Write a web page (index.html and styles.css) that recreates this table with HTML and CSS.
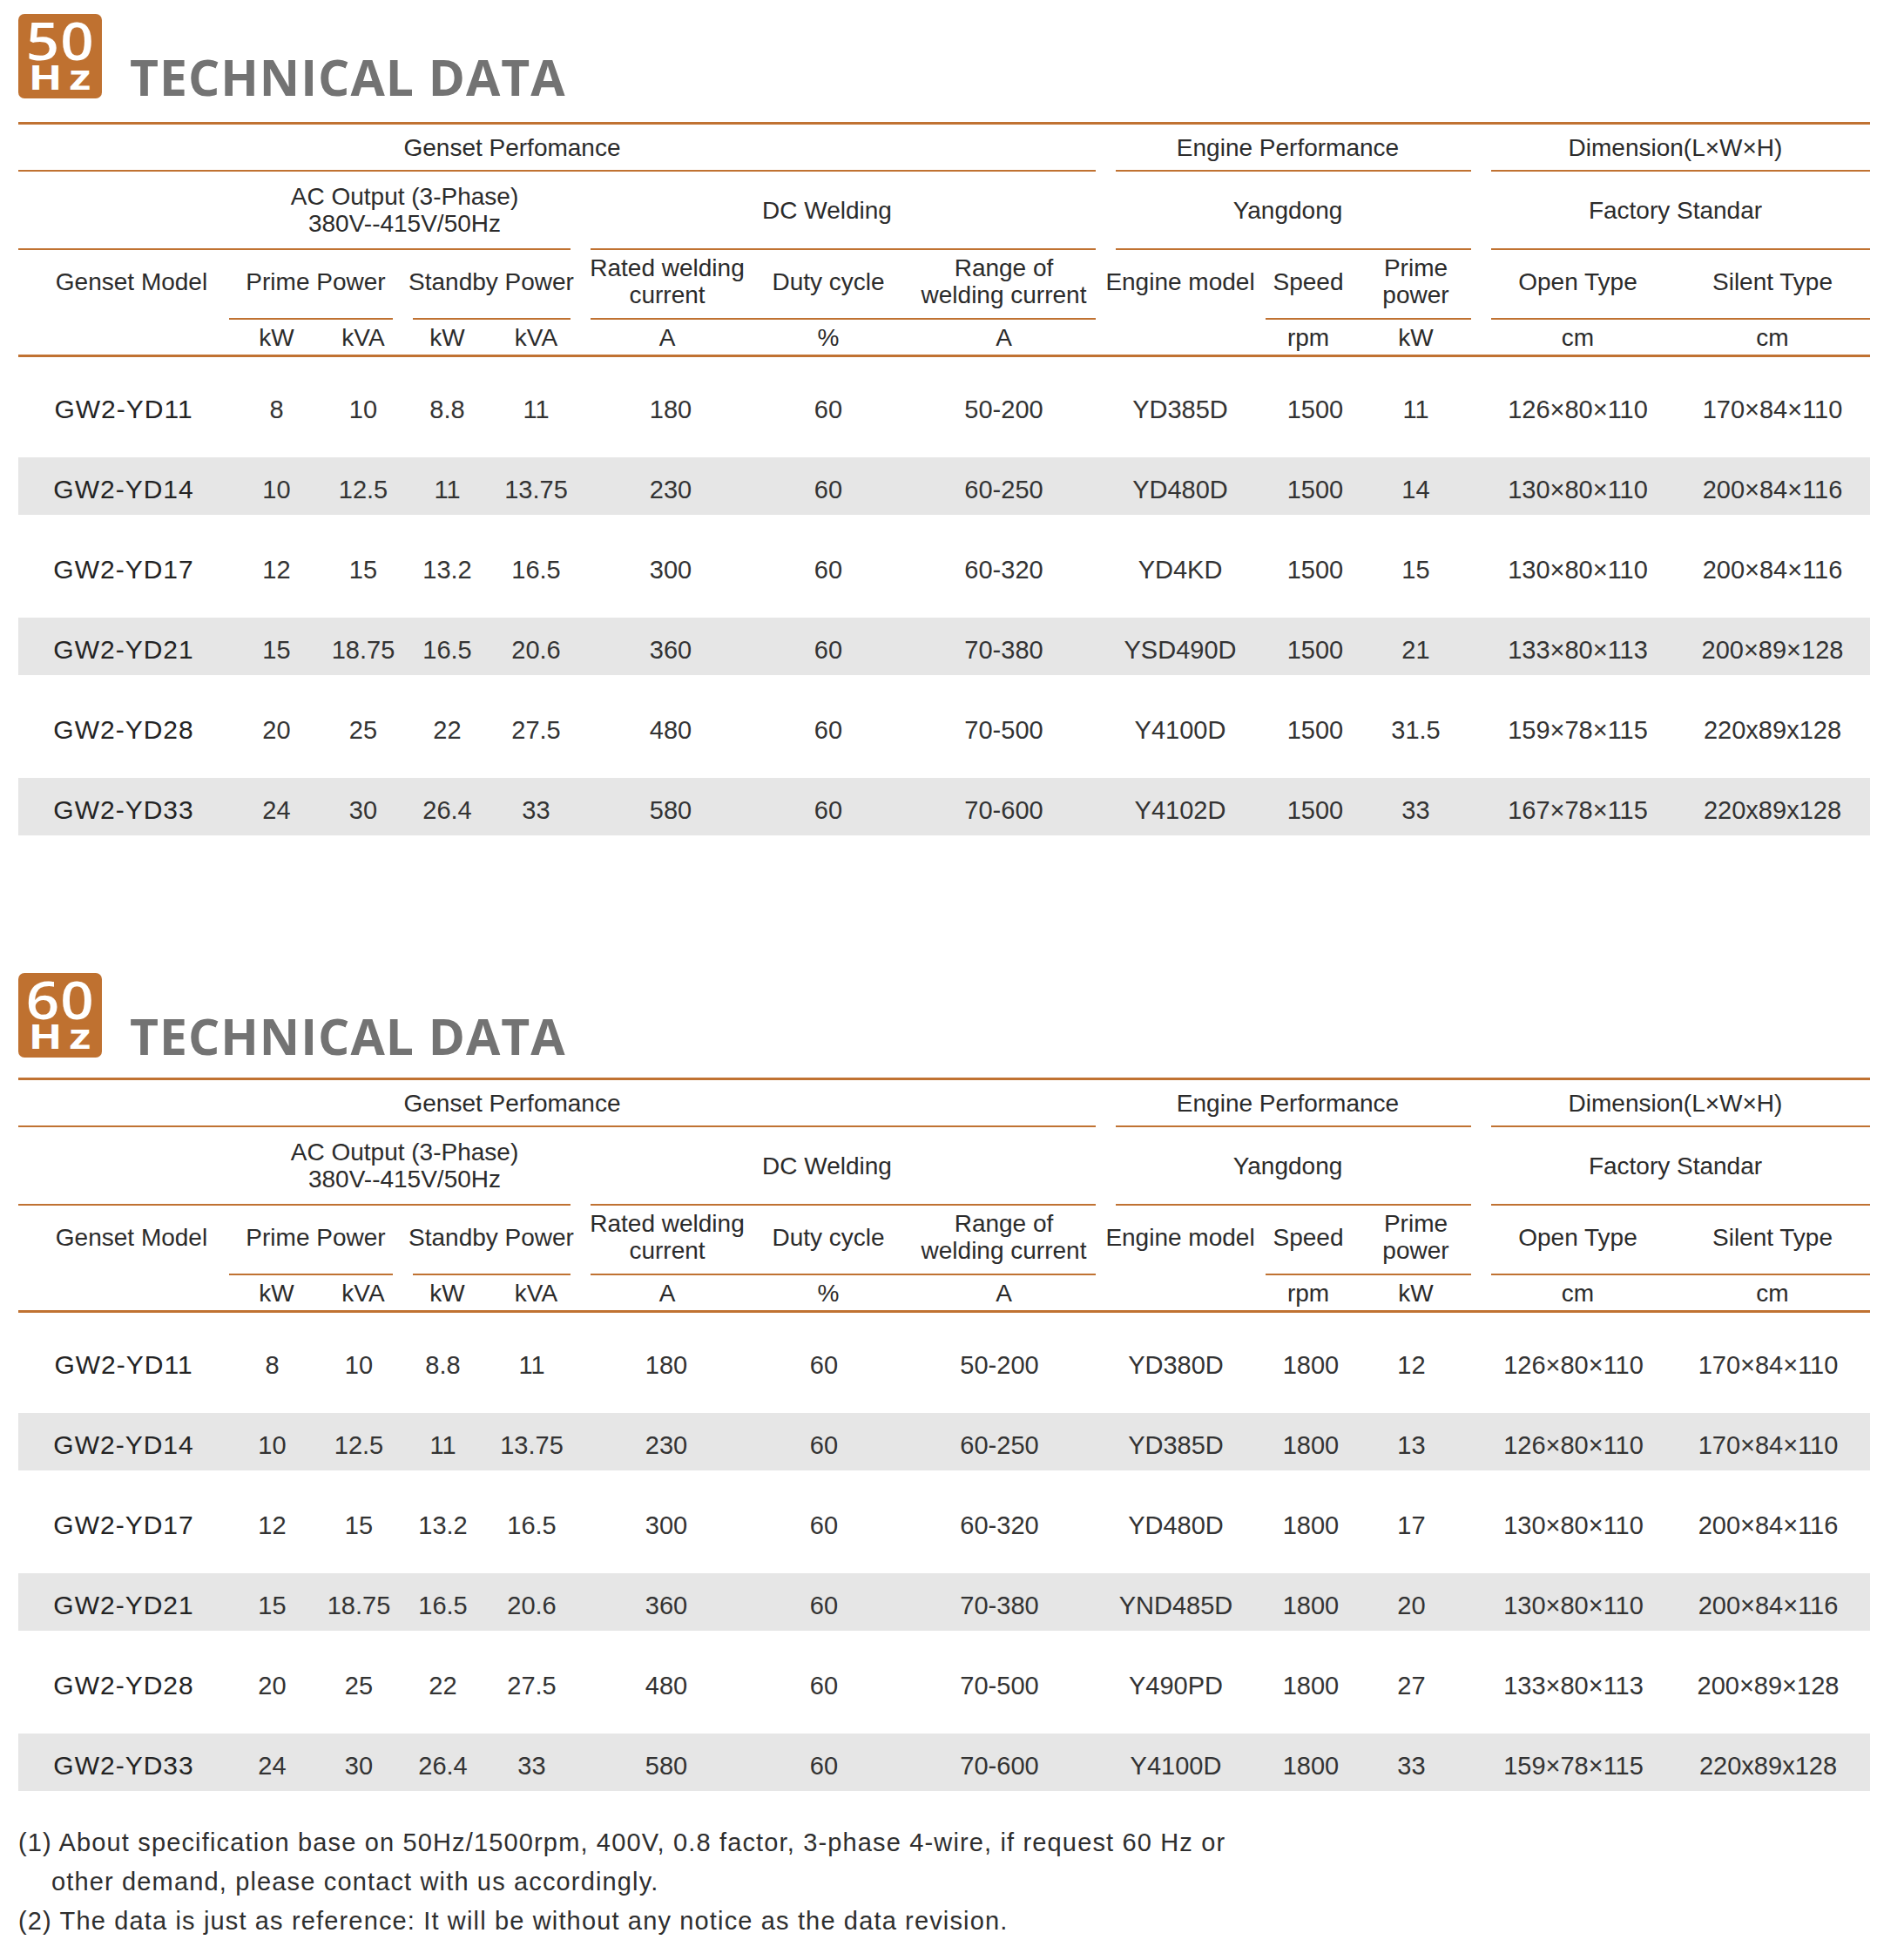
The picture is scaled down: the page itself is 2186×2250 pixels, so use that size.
FILE: index.html
```html
<!DOCTYPE html>
<html lang="en">
<head>
<meta charset="utf-8">
<title>Technical Data</title>
<link rel="stylesheet" href="styles.css">
</head>
<body>
<main class="page">

  <section class="sheet">
    <header class="head">
      <div class="badge">
        <span class="badge-num">50</span>
        <span class="badge-hz">Hz</span>
      </div>
      <h1 class="title">TECHNICAL DATA</h1>
    </header>
    <div class="table">
      <div class="thead">
        <div class="h span8 lr pad-gp">Genset Perfomance</div>
        <div class="h span3 llr pad-ep">Engine Performance</div>
        <div class="h span2 ll">Dimension(L×W×H)</div>

        <div class="h span5 lr pad-ac">AC Output (3-Phase)<br>380V--415V/50Hz</div>
        <div class="h span3 llr pad-dc">DC Welding</div>
        <div class="h span3 llr pad-ep">Yangdong</div>
        <div class="h span2 ll">Factory Standar</div>

        <div class="h hc pad-gm">Genset Model</div>
        <div class="h hc span2 lr">Prime Power</div>
        <div class="h hc span2 llr">Standby Power</div>
        <div class="h hc ll">Rated welding<br>current</div>
        <div class="h hc l">Duty cycle</div>
        <div class="h hc lr">Range of<br>welding current</div>
        <div class="h hc">Engine model</div>
        <div class="h hc ll">Speed</div>
        <div class="h hc lr pad-pp">Prime<br>power</div>
        <div class="h hc ll">Open Type</div>
        <div class="h hc l">Silent Type</div>

        <div class="h u"></div>
        <div class="h u">kW</div>
        <div class="h u">kVA</div>
        <div class="h u">kW</div>
        <div class="h u">kVA</div>
        <div class="h u">A</div>
        <div class="h u">%</div>
        <div class="h u">A</div>
        <div class="h u"></div>
        <div class="h u">rpm</div>
        <div class="h u pad-pp">kW</div>
        <div class="h u">cm</div>
        <div class="h u">cm</div>
      </div>
      <div class="tbody">
        <div class="row"><div class="d m">GW2-YD11</div><div class="d">8</div><div class="d">10</div><div class="d">8.8</div><div class="d">11</div><div class="d rw">180</div><div class="d">60</div><div class="d">50-200</div><div class="d">YD385D</div><div class="d sp">1500</div><div class="d pp">11</div><div class="d">126×80×110</div><div class="d">170×84×110</div></div>
        <div class="row"><div class="d m">GW2-YD14</div><div class="d">10</div><div class="d">12.5</div><div class="d">11</div><div class="d">13.75</div><div class="d rw">230</div><div class="d">60</div><div class="d">60-250</div><div class="d">YD480D</div><div class="d sp">1500</div><div class="d pp">14</div><div class="d">130×80×110</div><div class="d">200×84×116</div></div>
        <div class="row"><div class="d m">GW2-YD17</div><div class="d">12</div><div class="d">15</div><div class="d">13.2</div><div class="d">16.5</div><div class="d rw">300</div><div class="d">60</div><div class="d">60-320</div><div class="d">YD4KD</div><div class="d sp">1500</div><div class="d pp">15</div><div class="d">130×80×110</div><div class="d">200×84×116</div></div>
        <div class="row"><div class="d m">GW2-YD21</div><div class="d">15</div><div class="d">18.75</div><div class="d">16.5</div><div class="d">20.6</div><div class="d rw">360</div><div class="d">60</div><div class="d">70-380</div><div class="d">YSD490D</div><div class="d sp">1500</div><div class="d pp">21</div><div class="d">133×80×113</div><div class="d">200×89×128</div></div>
        <div class="row"><div class="d m">GW2-YD28</div><div class="d">20</div><div class="d">25</div><div class="d">22</div><div class="d">27.5</div><div class="d rw">480</div><div class="d">60</div><div class="d">70-500</div><div class="d">Y4100D</div><div class="d sp">1500</div><div class="d pp">31.5</div><div class="d">159×78×115</div><div class="d">220x89x128</div></div>
        <div class="row"><div class="d m">GW2-YD33</div><div class="d">24</div><div class="d">30</div><div class="d">26.4</div><div class="d">33</div><div class="d rw">580</div><div class="d">60</div><div class="d">70-600</div><div class="d">Y4102D</div><div class="d sp">1500</div><div class="d pp">33</div><div class="d">167×78×115</div><div class="d">220x89x128</div></div>
      </div>
    </div>
  </section>

  <section class="sheet sheet--60">
    <header class="head">
      <div class="badge">
        <span class="badge-num">60</span>
        <span class="badge-hz">Hz</span>
      </div>
      <h1 class="title">TECHNICAL DATA</h1>
    </header>
    <div class="table">
      <div class="thead">
        <div class="h span8 lr pad-gp">Genset Perfomance</div>
        <div class="h span3 llr pad-ep">Engine Performance</div>
        <div class="h span2 ll">Dimension(L×W×H)</div>

        <div class="h span5 lr pad-ac">AC Output (3-Phase)<br>380V--415V/50Hz</div>
        <div class="h span3 llr pad-dc">DC Welding</div>
        <div class="h span3 llr pad-ep">Yangdong</div>
        <div class="h span2 ll">Factory Standar</div>

        <div class="h hc pad-gm">Genset Model</div>
        <div class="h hc span2 lr">Prime Power</div>
        <div class="h hc span2 llr">Standby Power</div>
        <div class="h hc ll">Rated welding<br>current</div>
        <div class="h hc l">Duty cycle</div>
        <div class="h hc lr">Range of<br>welding current</div>
        <div class="h hc">Engine model</div>
        <div class="h hc ll">Speed</div>
        <div class="h hc lr pad-pp">Prime<br>power</div>
        <div class="h hc ll">Open Type</div>
        <div class="h hc l">Silent Type</div>

        <div class="h u"></div>
        <div class="h u">kW</div>
        <div class="h u">kVA</div>
        <div class="h u">kW</div>
        <div class="h u">kVA</div>
        <div class="h u">A</div>
        <div class="h u">%</div>
        <div class="h u">A</div>
        <div class="h u"></div>
        <div class="h u">rpm</div>
        <div class="h u pad-pp">kW</div>
        <div class="h u">cm</div>
        <div class="h u">cm</div>
      </div>
      <div class="tbody">
        <div class="row"><div class="d m">GW2-YD11</div><div class="d n">8</div><div class="d n">10</div><div class="d n">8.8</div><div class="d n">11</div><div class="d n rw">180</div><div class="d n">60</div><div class="d n">50-200</div><div class="d n">YD380D</div><div class="d n sp">1800</div><div class="d n pp">12</div><div class="d n">126×80×110</div><div class="d n">170×84×110</div></div>
        <div class="row"><div class="d m">GW2-YD14</div><div class="d n">10</div><div class="d n">12.5</div><div class="d n">11</div><div class="d n">13.75</div><div class="d n rw">230</div><div class="d n">60</div><div class="d n">60-250</div><div class="d n">YD385D</div><div class="d n sp">1800</div><div class="d n pp">13</div><div class="d n">126×80×110</div><div class="d n">170×84×110</div></div>
        <div class="row"><div class="d m">GW2-YD17</div><div class="d n">12</div><div class="d n">15</div><div class="d n">13.2</div><div class="d n">16.5</div><div class="d n rw">300</div><div class="d n">60</div><div class="d n">60-320</div><div class="d n">YD480D</div><div class="d n sp">1800</div><div class="d n pp">17</div><div class="d n">130×80×110</div><div class="d n">200×84×116</div></div>
        <div class="row"><div class="d m">GW2-YD21</div><div class="d n">15</div><div class="d n">18.75</div><div class="d n">16.5</div><div class="d n">20.6</div><div class="d n rw">360</div><div class="d n">60</div><div class="d n">70-380</div><div class="d n">YND485D</div><div class="d n sp">1800</div><div class="d n pp">20</div><div class="d n">130×80×110</div><div class="d n">200×84×116</div></div>
        <div class="row"><div class="d m">GW2-YD28</div><div class="d n">20</div><div class="d n">25</div><div class="d n">22</div><div class="d n">27.5</div><div class="d n rw">480</div><div class="d n">60</div><div class="d n">70-500</div><div class="d n">Y490PD</div><div class="d n sp">1800</div><div class="d n pp">27</div><div class="d n">133×80×113</div><div class="d n">200×89×128</div></div>
        <div class="row"><div class="d m">GW2-YD33</div><div class="d n">24</div><div class="d n">30</div><div class="d n">26.4</div><div class="d n">33</div><div class="d n rw">580</div><div class="d n">60</div><div class="d n">70-600</div><div class="d n">Y4100D</div><div class="d n sp">1800</div><div class="d n pp">33</div><div class="d n">159×78×115</div><div class="d n">220x89x128</div></div>
      </div>
    </div>
  </section>

  <div class="notes">
    <p>(1) About specification base on 50Hz/1500rpm, 400V, 0.8 factor, 3-phase 4-wire, if request 60 Hz or</p>
    <p class="indent">other demand, please contact with us accordingly.</p>
    <p>(2) The data is just as reference: It will be without any notice as the data revision.</p>
  </div>

</main>
</body>
</html>
```

FILE: styles.css
```css
* { box-sizing: border-box; margin: 0; padding: 0; }

html, body { background: #ffffff; }

body {
  font-family: "Liberation Sans", Arial, sans-serif;
  color: #2b2b2b;
}

.page {
  --orange: #c07232;
  --cols: 242px 109px 90px 103px 101px 200px 170px 233px 172px 122px 137px 223px 224px;
  width: 2126px;
  margin-left: 21px;
  padding-top: 16px;
}

.sheet--60 { margin-top: 141px; }
.sheet--60 .table { margin-top: 23px; }

/* ---------- heading ---------- */
.head {
  display: flex;
  align-items: flex-end;
  height: 97px;
}

.badge {
  flex: none;
  width: 96px;
  height: 97px;
  padding-top: 9px;
  border-radius: 7px;
  background: #bf7130;
  color: #ffffff;
  font-family: "Open Sans", sans-serif;
  display: flex;
  flex-direction: column;
  align-items: center;
}

.badge-num {
  display: block;
  font-size: 60px;
  font-weight: 600;
  line-height: 43px;
  height: 43px;
  letter-spacing: 1px;
  transform: scaleX(1.12);
}

.badge-hz {
  display: block;
  margin-top: 6px;
  margin-left: 6px;
  font-size: 39px;
  font-weight: 700;
  line-height: 28px;
  height: 28px;
  letter-spacing: 6px;
  transform: scaleX(1.3);
}

.title {
  margin-left: 32px;
  margin-bottom: -4px;
  font-family: "Open Sans", sans-serif;
  font-weight: 700;
  font-size: 57px;
  line-height: 57px;
  letter-spacing: 1px;
  color: #737373;
}

/* ---------- table ---------- */
.table {
  margin-top: 27px;
  border-top: 3px solid var(--orange);
}

.thead {
  display: grid;
  grid-template-columns: var(--cols);
  grid-template-rows: 54px 90px 80px 40px;
  border-bottom: 3px solid var(--orange);
}

.h {
  display: flex;
  align-items: center;
  justify-content: center;
  text-align: center;
  font-size: 28px;
  line-height: 31px;
  padding-bottom: 2px;
  color: #2b2b2b;
  background-repeat: no-repeat;
}

.hc { padding-bottom: 8px; }
.u { padding-bottom: 0; }

.span2 { grid-column: span 2; }
.span3 { grid-column: span 3; }
.span5 { grid-column: span 5; }
.span8 { grid-column: span 8; }

.l, .ll, .lr, .llr {
  background-image: linear-gradient(var(--orange), var(--orange));
}
.l   { background-size: 100% 2px; background-position: left bottom; }
.ll  { background-size: calc(100% - 12px) 2px; background-position: right bottom; }
.lr  { background-size: calc(100% - 11px) 2px; background-position: left bottom; }
.llr { background-size: calc(100% - 23px) 2px; background-position: 12px 100%; }

.pad-gp { padding-right: 114px; }
.pad-ac { padding-left: 242px; }
.pad-dc { padding-right: 36px; }
.pad-gm { padding-left: 18px; }
.pad-ep { padding-right: 12px; }
.pad-pp { padding-right: 12px; }

.tbody { padding-top: 14px; }

.row {
  display: grid;
  grid-template-columns: var(--cols);
  height: 92px;
  align-items: center;
}

.row:nth-child(even) {
  background: linear-gradient(to bottom,
    transparent 9px, #e6e6e6 9px, #e6e6e6 75px, transparent 75px);
}

.d {
  text-align: center;
  font-size: 29px;
  line-height: 34px;
  color: #333333;
}

.m {
  font-size: 30px;
  letter-spacing: 1px;
  color: #232323;
}

.rw { padding-left: 8px; }
.sp { padding-left: 16px; }
.pp { padding-right: 12px; }

.sheet--60 .n { padding-right: 10px; }
.sheet--60 .n.rw { padding-left: 8px; padding-right: 10px; }
.sheet--60 .n.sp { padding-left: 16px; padding-right: 10px; }
.sheet--60 .n.pp { padding-right: 22px; }

/* ---------- notes ---------- */
.notes {
  margin-top: 20px;
  font-size: 29px;
  line-height: 45px;
  letter-spacing: 1.15px;
  color: #2e2e2e;
}

.notes .indent { padding-left: 38px; }
```
